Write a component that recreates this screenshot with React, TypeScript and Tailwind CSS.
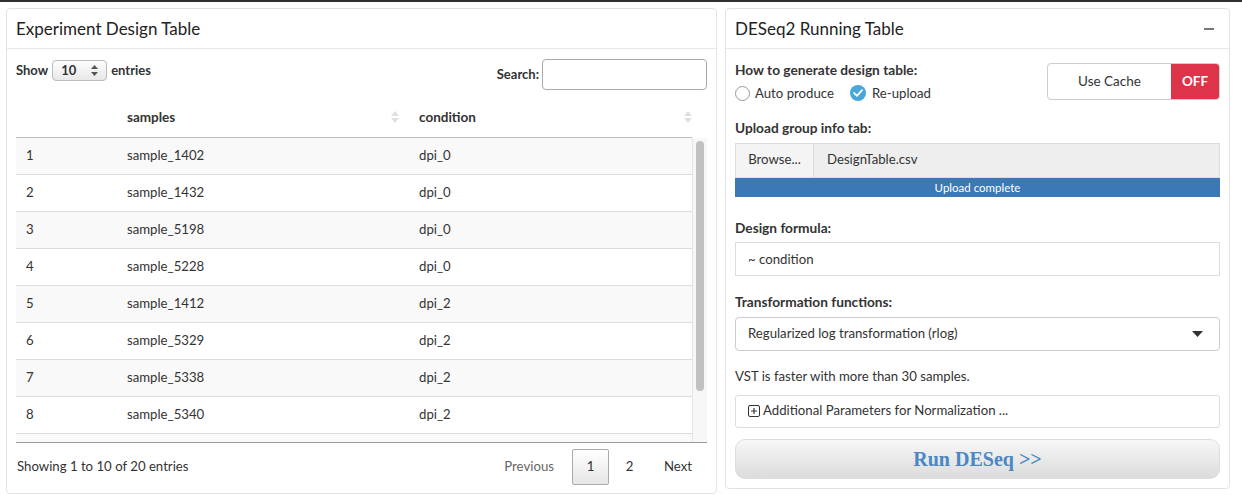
import type { ReactNode } from "react";

const rows = [
  ["1", "sample_1402", "dpi_0"],
  ["2", "sample_1432", "dpi_0"],
  ["3", "sample_5198", "dpi_0"],
  ["4", "sample_5228", "dpi_0"],
  ["5", "sample_1412", "dpi_2"],
  ["6", "sample_5329", "dpi_2"],
  ["7", "sample_5338", "dpi_2"],
  ["8", "sample_5340", "dpi_2"],
  ["", "", ""],
];

function SortArrows() {
  return (
    <svg width="8" height="12" viewBox="0 0 8 12" className="shrink-0">
      <path d="M4 0 L8 5 L0 5 Z" fill="#e0e0e0" />
      <path d="M4 12 L8 7 L0 7 Z" fill="#e0e0e0" />
    </svg>
  );
}

function ExperimentTable() {
  return (
    <div className="w-[711px] h-[486px] mt-[6px] ml-[6px] rounded-[4px] border border-[#e3e3e3] bg-white flex flex-col shrink-0">
      <div className="h-[40px] border-b border-[#e8e8e8] flex items-center px-[9px]">
        <h2 className="text-[17px] text-[#222]">Experiment Design Table</h2>
      </div>
      <div className="px-[9px] pt-[10px] flex flex-col">
        <div className="flex justify-between items-start">
          <div className="flex items-center gap-[4px] text-[13px] font-bold text-[#333] mt-[1px]">
            <span>Show</span>
            <div className="w-[55px] h-[21px] rounded-[4px] border border-[#bbb] bg-gradient-to-b from-[#fdfdfd] to-[#e8e8e8] flex items-center justify-between px-[8px]">
              <span>10</span>
              <svg width="7" height="11" viewBox="0 0 7 11">
                <path d="M3.5 0 L7 4 L0 4 Z" fill="#555" />
                <path d="M3.5 11 L7 7 L0 7 Z" fill="#555" />
              </svg>
            </div>
            <span>entries</span>
          </div>
          <div className="flex items-center gap-[3px] text-[13px] font-bold text-[#333]">
            <span>Search:</span>
            <div className="w-[165px] h-[31px] rounded-[4px] border border-[#aaa] bg-white" />
          </div>
        </div>

        <div className="mt-[7px] h-[41px] flex items-center border-b border-[#bbb] text-[13.5px] font-bold text-[#333] mr-[15px]">
          <div className="w-[101px]" />
          <div className="w-[292px] flex items-center justify-between pl-[10px] pr-[10px]">
            <span>samples</span>
            <SortArrows />
          </div>
          <div className="flex-1 flex items-center justify-between pl-[10px]">
            <span>condition</span>
            <SortArrows />
          </div>
        </div>

        <div className="h-[305px] flex border-b border-[#999] overflow-hidden">
          <div className="flex-1 flex flex-col">
            {rows.map((r, i) => (
              <div
                key={i}
                className={`h-[37px] shrink-0 flex items-center border-b border-[#ddd] text-[13.2px] text-[#333] ${
                  i % 2 === 0 ? "bg-[#f9f9f9]" : "bg-white"
                }`}
              >
                <div className="w-[101px] pl-[10px]">{r[0]}</div>
                <div className="w-[292px] pl-[10px]">{r[1]}</div>
                <div className="flex-1 pl-[10px]">{r[2]}</div>
              </div>
            ))}
          </div>
          <div className="w-[15px] bg-[#f7f7f7] border-l border-[#e6e6e6] flex justify-center pt-[3px]">
            <div className="w-[8px] h-[250px] rounded-full bg-[#c1c1c1]" />
          </div>
        </div>

        <div className="flex items-center justify-between mt-[6px] text-[13.2px] text-[#333]">
          <span className="pl-[1px]">Showing 1 to 10 of 20 entries</span>
          <div className="flex items-center">
            <span className="pr-[18px] text-[#666]">Previous</span>
            <span className="w-[37px] h-[36px] rounded-[2px] border border-[#aaa] bg-gradient-to-b from-[#fff] to-[#e6e6e6] flex items-center justify-center">1</span>
            <span className="w-[41px] text-center">2</span>
            <span className="pl-[14px] pr-[15px]">Next</span>
          </div>
        </div>
      </div>
    </div>
  );
}

function Label({ children, className = "" }: { children: ReactNode; className?: string }) {
  return <div className={`text-[13.7px] font-bold text-[#333] ${className}`}>{children}</div>;
}

function RunningTable() {
  return (
    <div className="w-[505px] h-[481px] mt-[6px] ml-[8px] rounded-[4px] border border-[#e3e3e3] bg-white flex flex-col shrink-0">
      <div className="h-[40px] border-b border-[#e8e8e8] flex items-center justify-between px-[9px]">
        <h2 className="text-[17px] text-[#222]">DESeq2 Running Table</h2>
        <div className="w-[10px] h-[2px] bg-[#777] mr-[6px]" />
      </div>
      <div className="px-[9px] flex flex-col text-[13.2px] text-[#333]">
        <div className="flex justify-between items-start mt-[11px]">
          <div>
            <Label>How to generate design table:</Label>
            <div className="flex items-center mt-[3px]">
              <span className="w-[15px] h-[15px] rounded-full border border-[#999] bg-white" />
              <span className="ml-[5px]">Auto produce</span>
              <span className="ml-[16px] w-[16px] h-[16px] rounded-full bg-[#4aa5d9] flex items-center justify-center">
                <svg width="10" height="8" viewBox="0 0 10 8">
                  <path d="M1 4 L4 6.8 L9 1.2" stroke="white" strokeWidth="1.8" fill="none" strokeLinecap="round" strokeLinejoin="round" />
                </svg>
              </span>
              <span className="ml-[6px]">Re-upload</span>
            </div>
          </div>
          <div className="w-[173px] h-[37px] mt-[3px] rounded-[4px] border border-[#ccc] flex overflow-hidden text-[13.5px]">
            <div className="flex-1 flex items-center justify-center">Use Cache</div>
            <div className="w-[48px] bg-[#dc3448] text-white font-bold flex items-center justify-center">OFF</div>
          </div>
        </div>

        <Label className="mt-[15px]">Upload group info tab:</Label>
        <div className="mt-[4px] h-[35px] flex border border-[#ddd] bg-[#eee]">
          <div className="w-[78px] border-r border-[#ddd] bg-[#f4f4f4] flex items-center justify-center">Browse...</div>
          <div className="flex-1 flex items-center pl-[13px]">DesignTable.csv</div>
        </div>
        <div className="h-[19px] bg-[#3c78b6] text-white text-[11.5px] flex items-center justify-center">Upload complete</div>

        <Label className="mt-[21px]">Design formula:</Label>
        <div className="mt-[4px] h-[34px] border border-[#ddd] flex items-center pl-[12px]">~ condition</div>

        <Label className="mt-[16px]">Transformation functions:</Label>
        <div className="mt-[4px] h-[34px] rounded-[4px] border border-[#ccc] flex items-center justify-between pl-[12px] pr-[16px]">
          <span>Regularized log transformation (rlog)</span>
          <svg width="11" height="6" viewBox="0 0 11 6">
            <path d="M0 0 L11 0 L5.5 6 Z" fill="#333" />
          </svg>
        </div>

        <div className="mt-[16px]">VST is faster with more than 30 samples.</div>

        <div className="mt-[8px] h-[33px] rounded-[3px] border border-[#ddd] flex items-center pl-[12px]">
          <svg width="12" height="12" viewBox="0 0 12 12" className="mr-[3px]">
            <rect x="0.5" y="0.5" width="11" height="11" rx="1.5" fill="none" stroke="#333" />
            <path d="M6 3 V9 M3 6 H9" stroke="#333" strokeWidth="1.2" />
          </svg>
          <span>Additional Parameters for Normalization ...</span>
        </div>

        <div className="mt-[11px] h-[40px] rounded-[10px] border border-[#ddd] bg-gradient-to-b from-[#f7f7f7] to-[#dcdcdc] flex items-center justify-center">
          <span className="text-[20px] font-bold text-[#4a87c4] [font-family:'Liberation_Serif',serif]">Run DESeq &gt;&gt;</span>
        </div>
      </div>
    </div>
  );
}

export default function App() {
  return (
    <div className="w-[1242px] h-[495px] bg-white overflow-hidden [font-family:Lato,'Noto_Sans',sans-serif]">
      <div className="h-[2px] bg-[#2f2f2f]" />
      <div className="flex">
        <ExperimentTable />
        <RunningTable />
      </div>
    </div>
  );
}
